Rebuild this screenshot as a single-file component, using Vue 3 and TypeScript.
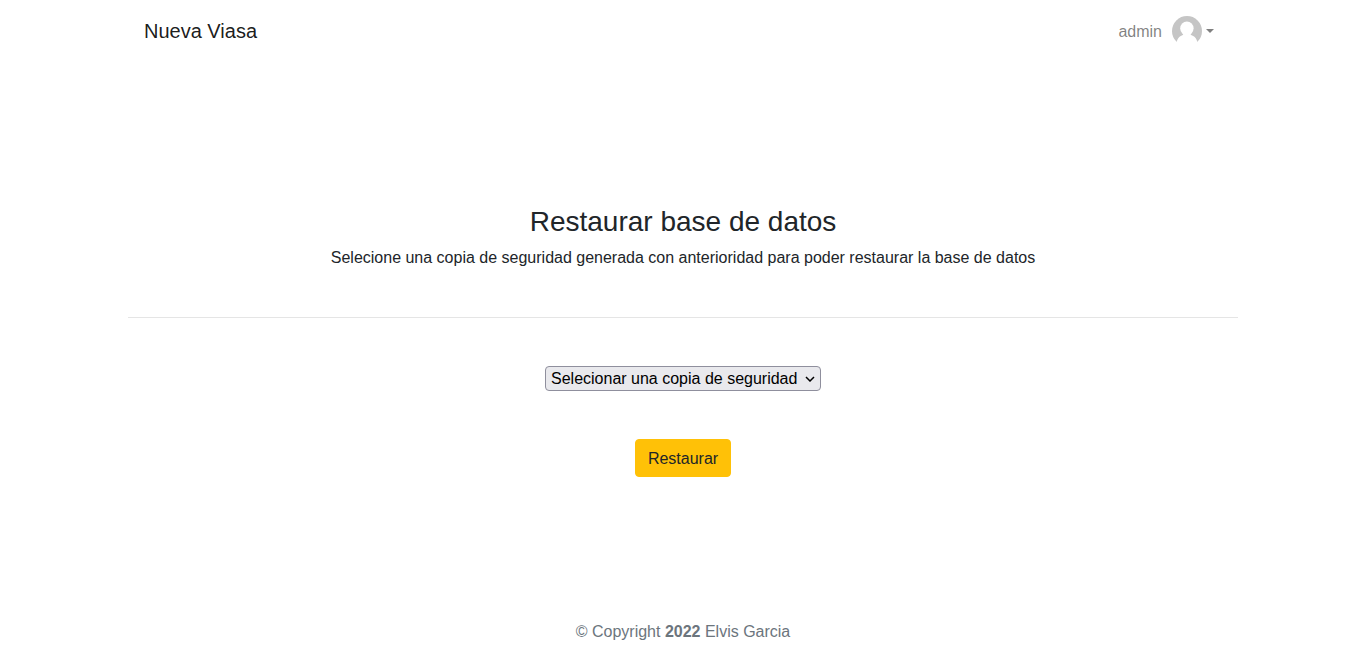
<script setup lang="ts">
import { ref } from 'vue'

const brand = 'Nueva Viasa'
const user = 'admin'
const backups: string[] = []
const selected = ref('')
</script>

<template>
  <div class="page">
    <nav class="navbar">
      <a class="brand">{{ brand }}</a>
      <a class="user">
        <span class="name">{{ user }}</span>
        <svg class="avatar" viewBox="0 0 30 30" aria-hidden="true">
          <circle cx="15" cy="15" r="15" fill="#c5c5c5" />
          <ellipse cx="14.900" cy="12.300" rx="6.700" ry="6.900" fill="#fff" />
          <path d="M11.200 16V18.200C11 19.300 9 19.600 7.600 20.800C5.800 22.300 5 24.500 4.300 27L4 31H26L25.700 27C25 24.500 24.200 22.300 22.400 20.800C21 19.600 18.800 19.300 18.600 18.200V16Z" fill="#fff" />
        </svg>
        <span class="caret"></span>
      </a>
    </nav>
    <main class="content">
      <h3>Restaurar base de datos</h3>
      <p>Selecione una copia de seguridad generada con anterioridad para poder restaurar la base de datos</p>
      <hr />
      <div class="picker">
        <select v-model="selected">
          <option value="">Selecionar una copia de seguridad</option>
          <option v-for="b in backups" :key="b" :value="b">{{ b }}</option>
        </select>
        <svg class="chevron" viewBox="0 0 10 6" aria-hidden="true">
          <path d="M1 1L5 5L9 1" />
        </svg>
      </div>
      <button type="button">Restaurar</button>
    </main>
    <footer>© Copyright <strong>2022</strong> Elvis Garcia</footer>
  </div>
</template>

<style>
body {
  background: #fff;
}
</style>

<style scoped>
.page {
  box-sizing: border-box;
  height: 659px;
  width: 1110px;
  margin: 0 auto;
  display: flex;
  flex-direction: column;
  font: 16px/24px "Liberation Sans", Arial, sans-serif;
  color: #212529;
}
.navbar {
  height: 62px;
  padding: 0 24px 0 16px;
  display: flex;
  justify-content: space-between;
  align-items: center;
}
.brand {
  font-size: 20px;
  line-height: 30px;
  color: rgba(0, 0, 0, 0.9);
}
.user {
  display: flex;
  align-items: center;
  color: rgba(0, 0, 0, 0.5);
}
.name {
  margin-right: 10px;
  padding-top: 1px;
}
.avatar {
  width: 30px;
  height: 30px;
}
.caret {
  margin-left: 4px;
  border-top: 4.8px solid currentColor;
  border-left: 4.8px solid transparent;
  border-right: 4.8px solid transparent;
}
.content {
  padding-top: 143px;
  display: flex;
  flex-direction: column;
  align-items: center;
}
h3 {
  margin: 0 0 8px;
  font-size: 28px;
  font-weight: 400;
  line-height: 33px;
}
p {
  margin: 0;
}
hr {
  width: 100%;
  margin: 47px 0 48px;
  border: 0;
  border-top: 1px solid rgba(0, 0, 0, 0.1);
}
.picker {
  display: grid;
  align-items: center;
  margin-bottom: 48px;
}
select {
  grid-area: 1 / 1;
  box-sizing: border-box;
  width: 276px;
  height: 25px;
  padding: 0 5px;
  border: 1px solid #8f8f9d;
  border-radius: 4px;
  background: #e9e9ed;
  color: #000;
  font: inherit;
  line-height: 23px;
  appearance: none;
}
.chevron {
  grid-area: 1 / 1;
  justify-self: end;
  width: 10px;
  height: 6px;
  margin-right: 6px;
  pointer-events: none;
}
.chevron path {
  fill: none;
  stroke: #000;
  stroke-width: 1.5;
}
button {
  height: 38px;
  padding: 8px 12px 6px;
  border: 1px solid #ffc107;
  border-radius: 4px;
  background: #ffc107;
  color: #212529;
  font: inherit;
  line-height: 22px;
}
footer {
  margin-top: auto;
  padding-bottom: 15px;
  text-align: center;
  color: #6c757d;
}
</style>
